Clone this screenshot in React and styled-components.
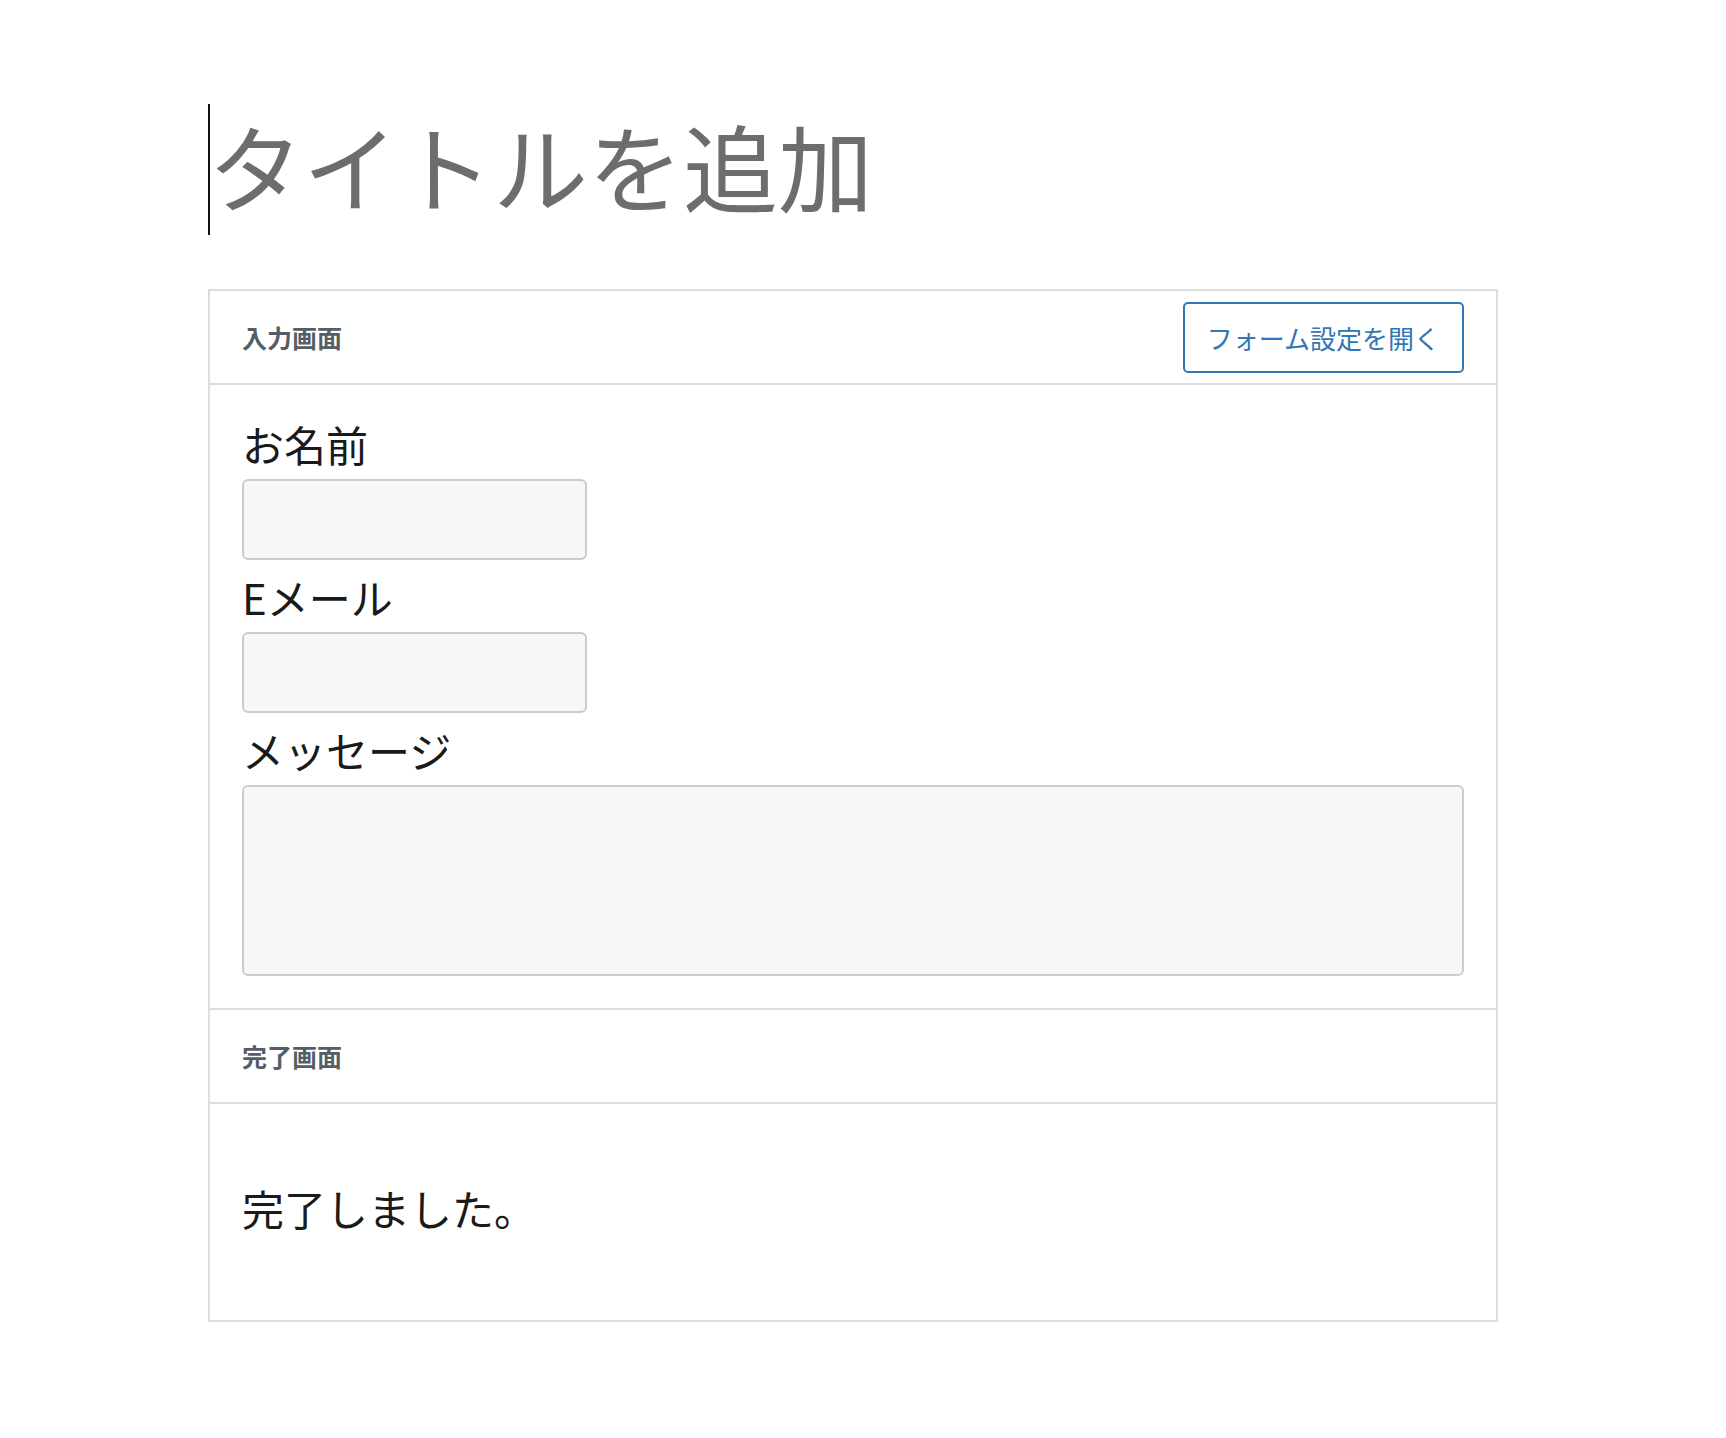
import React from "react";
import styled, { createGlobalStyle } from "styled-components";

const GlobalStyle = createGlobalStyle`
  body {
    margin: 0;
    background: #ffffff;
    font-family: "Noto Sans CJK JP", "Noto Sans", sans-serif;
  }
`;

const Page = styled.div`
  padding: 104px 0 110px 208px;
`;

const TitleField = styled.h1`
  position: relative;
  margin: 0;
  padding-bottom: 9px;
  font-size: 95px;
  font-weight: 400;
  line-height: 122px;
  color: #6d6d6d;

  &::before {
    content: "";
    position: absolute;
    left: 0;
    top: 0;
    bottom: 0;
    width: 2px;
    background: #111;
  }
`;

const FormBlock = styled.div`
  margin-top: 54px;
  width: 1290px;
  box-sizing: border-box;
  border: 2px solid #dddddd;
`;

const PanelHeader = styled.div`
  display: flex;
  align-items: center;
  justify-content: space-between;
  height: 92px;
  padding: 0 32px;
  border-bottom: 2px solid #dddddd;
`;

const PanelTitle = styled.span`
  font-size: 25px;
  font-weight: 700;
  color: #555d66;
`;

const OpenButton = styled.button`
  height: 71px;
  padding: 0 22px;
  font-family: "Noto Sans CJK JP", sans-serif;
  font-size: 26px;
  color: #3176b5;
  background: #ffffff;
  border: 2px solid #3176b5;
  border-radius: 5px;
  cursor: pointer;
`;

const PanelBody = styled.div`
  display: flex;
  flex-direction: column;
  padding: ${({ $top }) => $top || 30}px 32px 32px;
  border-bottom: ${({ $last }) => ($last ? "none" : "2px solid #dddddd")};
`;

const FieldLabel = styled.label`
  font-size: 42px;
  line-height: 58px;
  padding-bottom: 6px;
  color: #1a1a1a;
`;

const TextInput = styled.div`
  box-sizing: border-box;
  width: ${({ $wide }) => ($wide ? "100%" : "345px")};
  height: ${({ $tall }) => ($tall ? 191 : 81)}px;
  margin-bottom: ${({ $tall }) => ($tall ? 0 : 8)}px;
  background: #f7f7f7;
  border: 2px solid #cccccc;
  border-radius: 6px;
`;

const Message = styled.p`
  margin: 40px 0 48px;
  font-size: 42px;
  line-height: 64px;
  color: #1a1a1a;
`;

const fields = [
  { label: "お名前" },
  { label: "Eメール" },
  { label: "メッセージ", wide: true, tall: true },
];

export default function App() {
  return (
    <>
      <GlobalStyle />
      <Page>
        <TitleField>タイトルを追加</TitleField>
        <FormBlock>
          <PanelHeader>
            <PanelTitle>入力画面</PanelTitle>
            <OpenButton>フォーム設定を開く</OpenButton>
          </PanelHeader>
          <PanelBody>
            {fields.map(({ label, wide, tall }) => (
              <React.Fragment key={label}>
                <FieldLabel>{label}</FieldLabel>
                <TextInput $wide={wide} $tall={tall} />
              </React.Fragment>
            ))}
          </PanelBody>
          <PanelHeader>
            <PanelTitle>完了画面</PanelTitle>
          </PanelHeader>
          <PanelBody $top={32} $last>
            <Message>完了しました。</Message>
          </PanelBody>
        </FormBlock>
      </Page>
    </>
  );
}
